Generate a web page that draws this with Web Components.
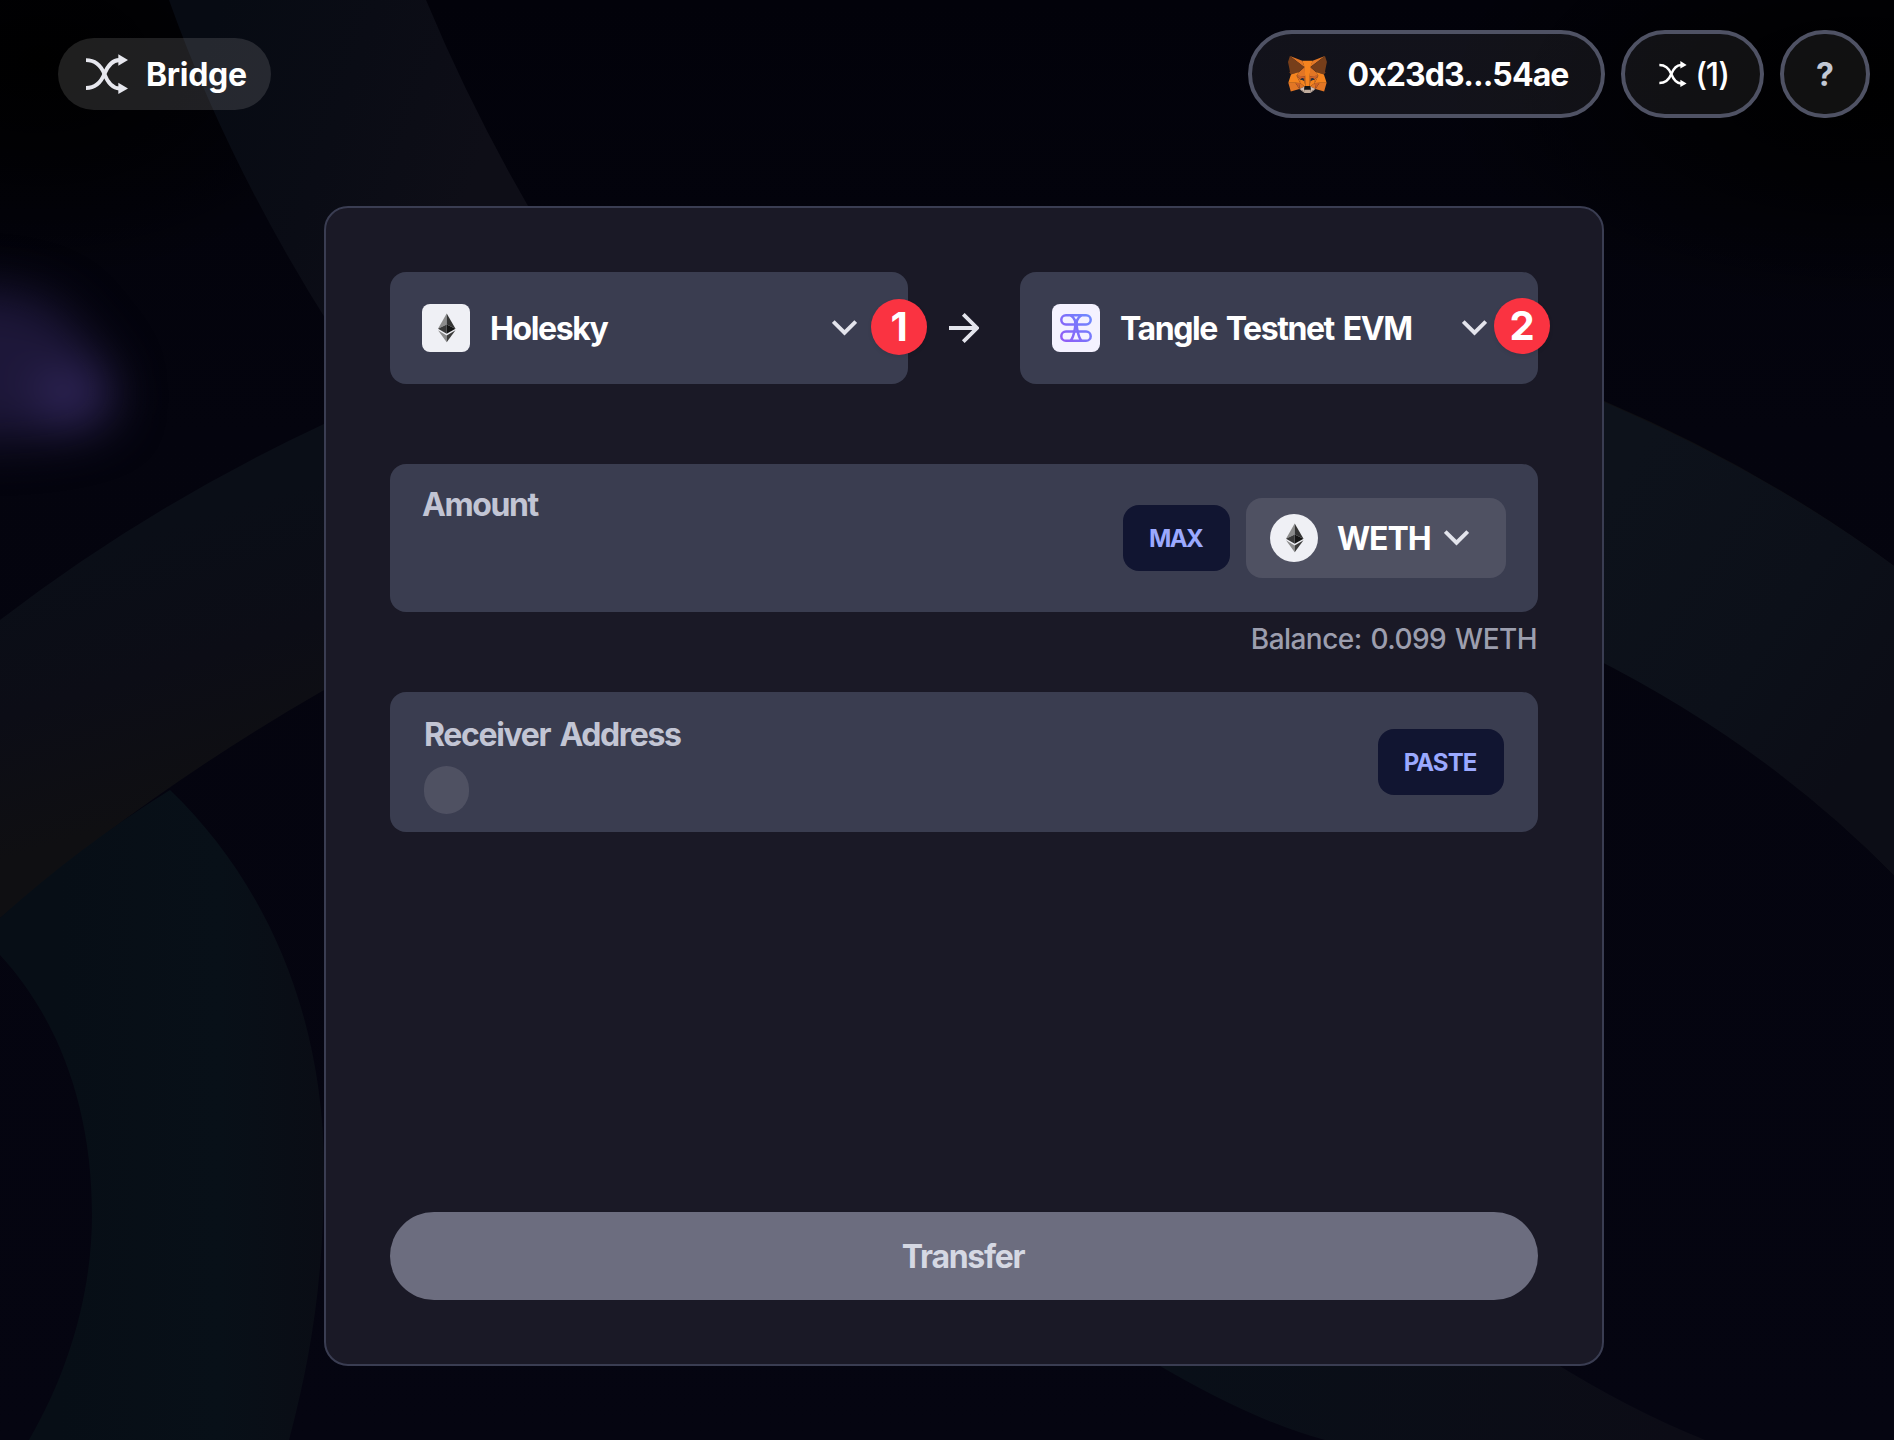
<!DOCTYPE html>
<html lang="en">
<head>
<meta charset="utf-8">
<title>Bridge</title>
<style>
html,body{margin:0;padding:0;background:#04040d}
body{font-family:Inter,"Liberation Sans",sans-serif;color:#fff;overflow:hidden}
</style>
</head>
<body>
<bridge-app></bridge-app>
<script>
const define = (name, html) => {
  const tpl = document.createElement('template');
  tpl.innerHTML = html;
  customElements.define(name, class extends HTMLElement {
    constructor() {
      super();
      this.attachShadow({ mode: 'open' }).append(tpl.content.cloneNode(true));
    }
  });
};

/* ---------- icons ---------- */
define('icon-shuffle', `<style>:host{display:block;flex:none;width:42px;height:40px;color:#e6e7ee}svg{display:block;width:100%;height:100%}</style>
<svg viewBox="0 0 126 120"><g fill="none" stroke="currentColor" stroke-width="11.5">
<path d="M0 18.5C34 18.5 47 40 55 60S76 102.500 100 103.500"/><path d="M0 102C34 102 47 80 55 60S76 19 100 18"/></g>
<path fill="currentColor" d="M97 0.500L126 18 97 35ZM97 86.500L126 103.500 97 120Z"/></svg>`);

define('icon-chevron', `<style>:host{display:block;flex:none;width:25px;height:16px}svg{display:block}</style>
<svg width="25" height="16" viewBox="0 0 25 16" fill="none" stroke="#e3e4ec" stroke-width="3.800"><path d="M1.300 1.500L12.500 12.700 23.700 1.500"/></svg>`);

define('icon-arrow', `<style>:host{display:block;flex:none;width:30px;height:30px}svg{display:block}</style>
<svg width="30" height="30" viewBox="0 0 30 30" fill="none" stroke="#e3e4ec" stroke-width="3.800"><path d="M0 15H27M14.300 1.300L28 15 14.300 28.700"/></svg>`);

define('icon-eth', `<style>:host{display:block;flex:none;width:48px;height:48px;background:#eff0f5;border-radius:8px}svg{display:block}:host([round]){border-radius:50%}</style>
<svg width="48" height="48" viewBox="0 0 48 48">
<path fill="#8c8c8c" d="M24.700 9.500V20.500L16 24.800Z"/><path fill="#343434" d="M24.700 9.500V20.500L33.500 24.800Z"/>
<path fill="#393939" d="M24.700 20.500V29.700L16 24.800Z"/><path fill="#141414" d="M24.700 20.500V29.700L33.500 24.800Z"/>
<path fill="#8c8c8c" d="M16 26.300L24.700 31.400V38.200Z"/><path fill="#3c3c3b" d="M33.500 26.300L24.700 31.400V38.200Z"/></svg>`);

define('icon-tangle', `<style>:host{display:block;flex:none;width:48px;height:48px;background:#f4f2ff;border-radius:8px}svg{display:block}</style>
<svg width="48" height="48" viewBox="0 0 48 48" fill="none">
<defs><linearGradient id="g" gradientUnits="userSpaceOnUse" x1="8" y1="38" x2="40" y2="10"><stop offset="0" stop-color="#9458f5"/><stop offset=".55" stop-color="#7a74fb"/><stop offset="1" stop-color="#6d8dff"/></linearGradient></defs>
<g stroke="url(#g)" stroke-width="2.500"><rect x="9.300" y="11.200" width="29.400" height="9.300" rx="4.650"/><rect x="9.300" y="27.500" width="29.400" height="9.300" rx="4.650"/>
<path d="M18.500 11.200C23.500 14 23.800 20 23 24S21.500 34 18.500 36.800M29.500 11.200C24.500 14 24.200 20 25 24S26.500 34 29.500 36.800"/></g></svg>`);

define('icon-metamask', `<style>:host{display:block;flex:none;width:39px;height:37px}svg{display:block}</style>
<svg width="39" height="37" viewBox="1 1 33.700 31.200" preserveAspectRatio="none">
<path fill="#E17726" d="M32.960 1L19.820 10.720 22.270 4.990Z"/>
<g fill="#E27625"><path d="M2.660 1L15.680 10.810 13.350 4.990ZM28.230 23.530L24.730 28.870 32.220 30.930 34.360 23.650ZM1.270 23.650L3.410 30.930 10.880 28.870 7.390 23.530ZM10.470 14.510L8.390 17.650 15.800 17.990 15.550 10ZM25.150 14.510L20 10 19.820 17.990 27.220 17.650ZM10.870 28.870L15.360 26.700 11.500 23.700ZM20.260 26.700L24.750 28.870 24.110 23.700Z"/></g>
<path fill="#D5BFB2" d="M24.750 28.870L20.260 26.700 20.630 29.620 20.580 30.860ZM10.870 28.870L15.050 30.860 15.020 29.620 15.360 26.700Z"/>
<path fill="#CC6228" d="M10.870 28.870L11.530 23.530 7.390 23.650ZM24.100 23.530L24.750 28.870 28.230 23.650ZM27.220 17.650L19.820 17.990 20.510 21.770 21.600 19.470 24.250 20.680ZM11.390 20.680L14.020 19.470 15.110 21.770 15.800 17.990 8.390 17.650Z"/>
<path fill="#E27525" d="M8.390 17.650L11.500 23.700 11.390 20.680ZM24.250 20.680L24.110 23.700 27.220 17.650ZM15.800 17.990L15.110 21.770 15.980 26.250 16.170 20.340ZM19.820 17.990L19.460 20.330 19.640 26.250 20.510 21.770Z"/>
<path fill="#F5841F" d="M20.510 21.770L19.640 26.250 20.260 26.700 24.110 23.700 24.250 20.680ZM11.390 20.680L11.500 23.700 15.360 26.700 15.980 26.250 15.110 21.770Z"/>
<path fill="#C0AC9D" d="M20.580 30.860L20.630 29.620 20.290 29.330H15.330L15.020 29.620 15.050 30.860 10.870 28.870 12.330 30.080 15.290 32.120H20.310L23.290 30.080 24.750 28.870Z"/>
<path fill="#161616" d="M20.260 26.700L19.640 26.250H15.980L15.360 26.700 15.020 29.620 15.330 29.330H20.290L20.630 29.620Z"/>
<path fill="#763E1A" d="M33.520 11.350L34.620 5.990 32.960 1 20.260 10.400 25.150 14.510 32.060 16.530 33.580 14.750 32.920 14.280ZM1 5.990L2.120 11.350 2.700 14.280 2.040 14.750 3.560 16.530 10.470 14.510 15.360 10.400 2.660 1Z"/>
<path fill="#F5841F" d="M32.060 16.530L25.150 14.510 27.220 17.650 24.110 23.700 28.230 23.650H34.360ZM10.470 14.510L3.560 16.530 1.270 23.650H7.390L11.500 23.700 8.390 17.650ZM19.820 17.990L20.260 10.400 22.270 4.990H13.350L15.360 10.400 15.800 17.990 15.960 20.360 15.980 26.250H19.640L19.670 20.360Z"/>
<path fill="#233447" d="M15.110 21.770L11.390 20.680 14.020 19.470ZM20.510 21.770L21.600 19.470 24.250 20.680Z"/>
</svg>`);

/* ---------- backdrop ---------- */
define('space-backdrop', `<style>:host{position:absolute;inset:0;z-index:-1;overflow:hidden}svg{display:block}</style>
<svg width="1894" height="1440" viewBox="0 0 1894 1440">
<defs>
<linearGradient id="base" x1="0" y1="0" x2="0" y2="1"><stop offset="0" stop-color="#02020a"/><stop offset=".3" stop-color="#04040e"/><stop offset="1" stop-color="#050511"/></linearGradient>
<radialGradient id="dark"><stop offset="0" stop-color="#000"/><stop offset=".4" stop-color="#000" stop-opacity=".7"/><stop offset="1" stop-color="#000" stop-opacity="0"/></radialGradient>
<linearGradient id="b1" gradientUnits="userSpaceOnUse" x1="200" y1="60" x2="480" y2="160"><stop offset="0" stop-color="#070b13"/><stop offset=".5" stop-color="#0a0c15"/><stop offset="1" stop-color="#0e0e17"/></linearGradient>
<linearGradient id="b2" gradientUnits="userSpaceOnUse" x1="120" y1="540" x2="200" y2="800"><stop offset="0" stop-color="#0a0e17"/><stop offset=".5" stop-color="#0c0d16"/><stop offset="1" stop-color="#0f0f12"/></linearGradient>
<linearGradient id="b3" gradientUnits="userSpaceOnUse" x1="1604" y1="500" x2="1894" y2="700"><stop offset="0" stop-color="#0d121b"/><stop offset=".6" stop-color="#0c1019"/><stop offset="1" stop-color="#0c0d16"/></linearGradient>
<linearGradient id="b4" gradientUnits="userSpaceOnUse" x1="60" y1="0" x2="324" y2="0"><stop offset="0" stop-color="#070e16"/><stop offset=".6" stop-color="#081018"/><stop offset="1" stop-color="#0a0d15"/></linearGradient>
<linearGradient id="b5" gradientUnits="userSpaceOnUse" x1="1180" y1="0" x2="1680" y2="0"><stop offset="0" stop-color="#090f18"/><stop offset="1" stop-color="#0c0c16"/></linearGradient>
<filter id="blur" x="-60%" y="-60%" width="220%" height="220%" color-interpolation-filters="sRGB"><feGaussianBlur stdDeviation="24"/></filter>
</defs>
<rect width="1894" height="1440" fill="url(#base)"/>
<ellipse cx="40" cy="60" rx="330" ry="220" fill="url(#dark)"/>
<ellipse cx="1860" cy="90" rx="420" ry="220" fill="url(#dark)"/>
<path fill="url(#b1)" d="M169 0Q228 165 330 326L560 260Q480 130 426 0Z"/>
<path fill="url(#b2)" d="M0 620Q150 505 324 424L1000 300 1604 401Q1765 470 1894 566V875Q1765 744 1604 662L900 520 324 690Q150 790 0 918Z"/>
<path fill="url(#b3)" d="M1590 396Q1765 470 1894 566V875Q1765 744 1590 656Z"/>
<path fill="url(#b4)" d="M0 918Q80 846 170 790C262 878 324 1010 324 1170C324 1270 313 1350 289 1440H29C70 1370 92 1290 92 1215C92 1110 60 1020 0 955Z"/>
<path fill="url(#b5)" d="M1150 1360Q1250 1420 1325 1440H1705Q1630 1410 1550 1360Z"/>
<g filter="url(#blur)"><path fill="#1d1739" d="M-60 290Q50 280 80 335Q124 380 112 412Q90 442 -60 440Z"/><ellipse cx="72" cy="398" rx="36" ry="30" fill="#2f2558"/></g>
</svg>`);

/* ---------- header ---------- */
define('nav-pill', `<style>:host{display:flex;align-items:center;gap:18px;width:213px;height:72px;border-radius:36px;background:rgba(255,255,255,.12);box-sizing:border-box;padding-left:28px;font:700 32px/40px Inter,sans-serif;letter-spacing:-.3px}span{padding-top:2px}</style><icon-shuffle></icon-shuffle><span><slot></slot></span>`);
define('round-button', `<style>:host{display:flex;align-items:center;justify-content:center;height:88px;border-radius:44px;border:4px solid #4f5264;background:rgba(255,255,255,.065);box-sizing:border-box;font:700 32px/40px Inter,sans-serif;white-space:nowrap}</style><slot></slot>`);
define('app-header', `<style>:host{display:flex;align-items:center;justify-content:space-between;padding:30px 24px 0 58px;height:88px}
.right{display:flex;gap:16px}.wallet{width:357px;gap:20px;letter-spacing:-.9px;padding-left:4px}.count{width:143px;gap:8px;font-weight:500;letter-spacing:-1.200px;padding-left:3px}.help{width:90px;color:#c2c8d4}
.right span{padding-top:2px}.count icon-shuffle{width:28px;height:26px;color:#fff}</style>
<nav-pill>Bridge</nav-pill><div class="right">
<round-button class="wallet"><icon-metamask></icon-metamask><span>0x23d3...54ae</span></round-button>
<round-button class="count"><icon-shuffle></icon-shuffle><span>(1)</span></round-button>
<round-button class="help"><span>?</span></round-button></div>`);

/* ---------- form ---------- */
define('step-badge', `<style>:host{position:absolute;width:56px;height:56px;border-radius:50%;background:#fa3341;box-shadow:0 2px 4px rgba(0,0,0,.08);display:flex;align-items:center;justify-content:center;font:700 40px/40px Inter,sans-serif}</style><span><slot></slot></span>`);
define('chain-select', `<style>:host{position:relative;display:flex;align-items:center;gap:20px;width:518px;height:112px;border-radius:16px;background:#3a3d50;box-sizing:border-box;padding:0 51px 0 32px;font:700 32px/40px Inter,sans-serif;white-space:nowrap}
.t{flex:1;padding-top:2px}</style><slot name="icon"></slot><span class="t"><slot></slot></span><icon-chevron></icon-chevron><slot name="badge"></slot>`);
define('mini-button', `<style>:host{display:flex;align-items:center;justify-content:center;height:66px;border-radius:16px;background:#111531;color:#9ba9ff;font:700 24px/30px Inter,sans-serif;letter-spacing:-.95px}span{padding-top:2px;margin-left:-2px}</style><span><slot></slot></span>`);
define('token-select', `<style>:host{display:flex;align-items:center;width:260px;height:80px;border-radius:16px;background:#4f5162;box-sizing:border-box;padding-left:24px;font:700 32px/40px Inter,sans-serif;letter-spacing:-1.1px}
span{margin:0 13px 0 19px;padding-top:2px}</style><icon-eth round></icon-eth><span><slot></slot></span><icon-chevron></icon-chevron>`);
define('amount-field', `<style>:host{display:flex;align-items:center;gap:16px;height:148px;border-radius:16px;background:#3a3d50;box-sizing:border-box;padding:0 32px}
.label{flex:1;align-self:flex-start;padding-top:21px;font:700 32px/40px Inter,sans-serif;letter-spacing:-1.400px;color:#c2c5d4}mini-button{width:107px}</style>
<span class="label">Amount</span><mini-button style="letter-spacing:-1.600px">MAX</mini-button><token-select>WETH</token-select>`);
define('address-field', `<style>:host{display:flex;align-items:center;justify-content:space-between;height:140px;border-radius:16px;background:#3a3d50;box-sizing:border-box;padding:0 34px}
.col{display:flex;flex-direction:column;gap:11px;align-self:flex-start;padding-top:23px}.label{font:700 32px/40px Inter,sans-serif;letter-spacing:-1.350px;word-spacing:3px;color:#c2c5d4}
.avatar{width:45px;height:48px;border-radius:24px;background:#4f5162}mini-button{width:126px}</style>
<div class="col"><span class="label">Receiver Address</span><div class="avatar"></div></div><mini-button>PASTE</mini-button>`);
define('transfer-button', `<style>:host{display:flex;align-items:center;justify-content:center;height:88px;border-radius:44px;background:#6c6d7f;color:#d5d8e3;font:700 32px/40px Inter,sans-serif;letter-spacing:-1.300px}span{padding-top:2px;margin-left:-2px}</style><span><slot></slot></span>`);
define('bridge-card', `<style>:host{display:flex;flex-direction:column;width:1280px;height:1160px;margin:88px 0 0 324px;border:2px solid #3a3d52;border-radius:24px;background:#1a1926;box-sizing:border-box;padding:64px}
.chains{display:flex;align-items:center;justify-content:space-between;margin-bottom:80px}
.balance{margin:7px 1px 33px 0;text-align:right;font:500 28px/40px Inter,sans-serif;letter-spacing:-.55px;word-spacing:2px;color:#9c9eae}
.a{letter-spacing:-1.400px}.b{letter-spacing:-1.450px;word-spacing:2.800px}step-badge{letter-spacing:0}
.a step-badge{left:481px;top:27px}.b step-badge{left:474px;top:26px}
transfer-button{margin-top:auto}</style>
<div class="chains"><chain-select class="a"><icon-eth slot="icon"></icon-eth>Holesky<step-badge slot="badge">1</step-badge></chain-select><icon-arrow></icon-arrow>
<chain-select class="b"><icon-tangle slot="icon"></icon-tangle>Tangle Testnet EVM<step-badge slot="badge">2</step-badge></chain-select></div>
<amount-field></amount-field><div class="balance">Balance: 0.099 WETH</div><address-field></address-field><transfer-button>Transfer</transfer-button>`);
define('bridge-app', `<style>:host{display:block;position:relative;z-index:0;width:1894px;height:1440px;overflow:hidden}</style><space-backdrop></space-backdrop><app-header></app-header><bridge-card></bridge-card>`);
</script>
</body>
</html>
